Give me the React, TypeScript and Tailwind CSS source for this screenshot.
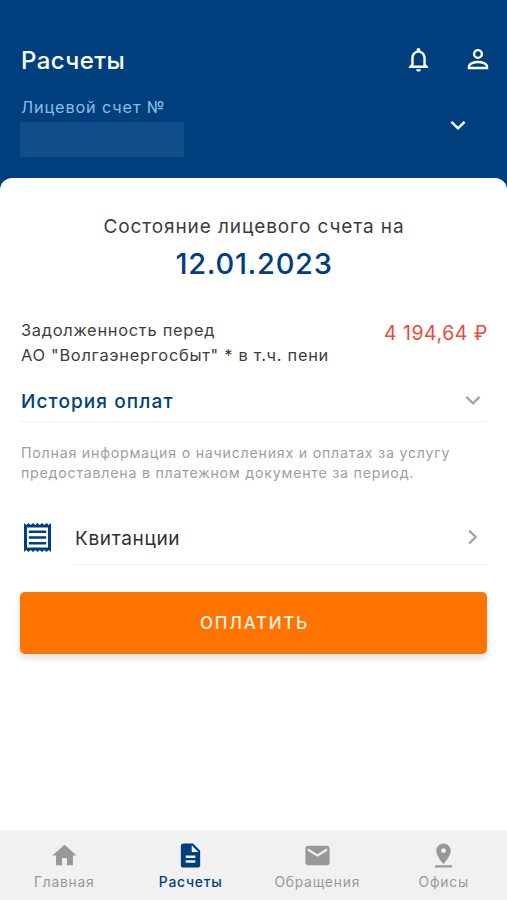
import type { ReactNode } from "react";
import {
  MdDescription,
  MdEmail,
  MdHome,
  MdNotificationsNone,
  MdPinDrop,
} from "react-icons/md";

function Chevron({ className, right = false }: { className: string; right?: boolean }) {
  return (
    <svg viewBox="0 0 18 18" fill="none" stroke="currentColor" strokeWidth="2.4" className={`size-[18px] shrink-0 ${className}`}>
      <path d={right ? "M5.2 2.6 11.6 9l-6.4 6.4" : "M2.4 5.8 9 12.3l6.6-6.5"} />
    </svg>
  );
}

function PersonIcon() {
  return (
    <svg viewBox="0 0 22 22" className="mr-[3px] mb-0.5 size-[22px]" fill="none" stroke="currentColor" strokeWidth="2.4">
      <circle cx="11" cy="6" r="3.9" />
      <path d="M2 20v-1.4c0-2.900 5-4.600 9-4.600s9 1.700 9 4.600V20z" />
    </svg>
  );
}

function ReceiptIcon() {
  return (
    <svg viewBox="0 0 27 29" className="h-[29px] w-[27px] text-[#003f7d]" fill="none" stroke="currentColor">
      <path fill="currentColor" stroke="none" d="M0 0l2.25 2L4.5 0l2.25 2L9 0l2.25 2L13.5 0l2.25 2L18 0l2.25 2L22.5 0l2.25 2L27 0v29l-2.25-2-2.25 2-2.25-2-2.25 2-2.25-2-2.25 2-2.25-2L9 29l-2.25-2-2.25 2-2.25-2L0 29z" />
      <path fill="#fff" stroke="none" d="M3 4.5h21v20H3z" />
      <path strokeWidth="2.5" d="M4.800 8.700h17.400M4.800 14.500h17.400M4.800 20.300h17.400" />
    </svg>
  );
}

function NavItem({ icon, label, active = false }: { icon: ReactNode; label: string; active?: boolean }) {
  return (
    <button className={`flex flex-1 flex-col items-center pt-[11px] ${active ? "text-[#003f7d]" : "text-[#989898]"}`}>
      {icon}
      <span className={`mt-0.5 text-[13.8px] leading-[20px] tracking-[0.8px] whitespace-nowrap ${active ? "font-medium" : ""}`}>{label}</span>
    </button>
  );
}

export default function App() {
  return (
    <div className="flex h-[900px] w-[507px] flex-col overflow-hidden bg-[#003f7d] font-['Inter','Liberation_Sans',sans-serif] whitespace-nowrap">
      <header className="h-[178px] shrink-0 pt-11 pl-[21px]">
        <div className="flex h-8 items-center pr-[15px] text-white">
          <h1 className="flex-1 pt-px text-[24px] leading-8 font-medium tracking-[0.4px]">Расчеты</h1>
          <MdNotificationsNone className="mr-[34px] mb-0.5 size-[29px]" />
          <PersonIcon />
        </div>
        <div className="mt-[19px] flex justify-between">
          <div>
            <p className="text-[16.3px] leading-6 tracking-[0.85px] text-[#8ebcea]">Лицевой счет №</p>
            <div className="mt-[3px] -ml-px h-[35px] w-[164px] bg-[#104e8b]" />
          </div>
          <Chevron className="mt-[21px] mr-10 text-white" />
        </div>
      </header>

      <main className="flex-1 rounded-t-[12px] bg-white pt-[37px] pr-5 pl-[21px] text-[#3c3c3c]">
        <p className="text-center text-[19px] leading-6 tracking-[0.9px]">Состояние лицевого счета на</p>
        <p className="mt-[7px] text-center text-[29px] leading-9 font-medium tracking-[0.7px] text-[#003f7d]">12.01.2023</p>

        <div className="mt-9 flex justify-between">
          <p className="text-[16.4px] leading-[24.5px] tracking-[0.72px]">
            Задолженность перед<br />АО "Волгаэнергосбыт" * в т.ч. пени
          </p>
          <p className="mt-px -mr-px text-[19.5px] leading-7 tracking-[0.5px] text-[#e94b3c]">4 194,64 ₽</p>
        </div>

        <button className="flex h-[55px] w-full items-center justify-between border-b border-[#eeeeee] pt-[15px] text-left">
          <span className="mt-px text-[19px] font-medium tracking-[1.1px] text-[#003f7d]">История оплат</span>
          <Chevron className="mr-[5px] mb-1 text-[#a6a6a6]" />
        </button>

        <p className="mt-[21px] text-[14.2px] leading-[19.5px] tracking-[0.77px] text-[#a0a0a0]">
          Полная информация о начислениях и оплатах за услугу<br />предоставлена в платежном документе за период.
        </p>

        <button className="mt-[28px] flex h-[55px] w-full text-left">
          <span className="flex h-full w-[53px] items-center pl-[3px]"><ReceiptIcon /></span>
          <span className="flex flex-1 items-center justify-between border-b border-[#eeeeee]">
            <span className="mt-1 pl-px text-[19px] tracking-[0.65px] text-[#303030]">Квитанции</span>
            <Chevron right className="mr-[5px] text-[#a6a6a6]" />
          </span>
        </button>

        <button className="mt-[27px] -ml-px h-[62px] w-[467px] rounded-[5px] bg-[#ff7300] pt-0.5 pl-0.5 text-[17px] font-medium tracking-[1.7px] text-[#fff3e6] shadow-[0_4px_7px_rgba(0,0,0,0.13)]">
          ОПЛАТИТЬ
        </button>
      </main>

      <nav className="flex h-[70px] shrink-0 bg-[#f1f1f1] pl-px">
        <NavItem icon={<MdHome className="size-[29px]" />} label="Главная" />
        <NavItem icon={<MdDescription className="size-[29px]" />} label="Расчеты" active />
        <NavItem icon={<MdEmail className="size-[29px]" />} label="Обращения" />
        <NavItem icon={<MdPinDrop className="size-[29px]" />} label="Офисы" />
      </nav>
    </div>
  );
}
